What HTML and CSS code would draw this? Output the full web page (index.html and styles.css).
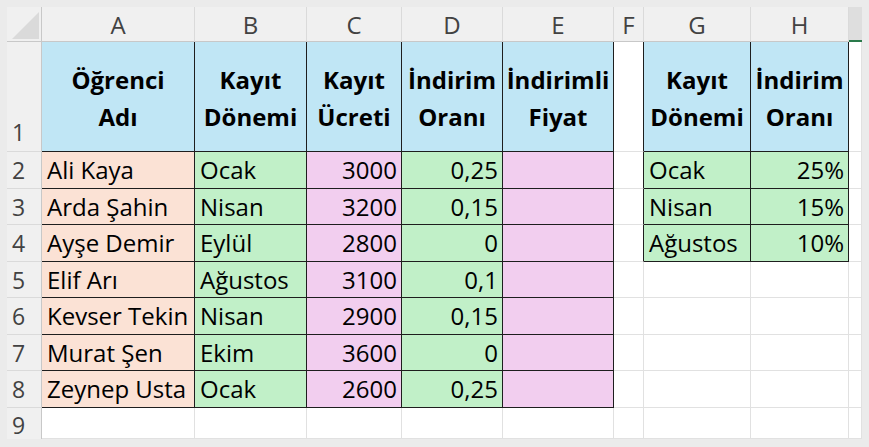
FILE: index.html
```html
<!DOCTYPE html>
<html lang="tr">
<head>
<meta charset="utf-8">
<title>Excel</title>
<link rel="stylesheet" href="styles.css">
</head>
<body>
<div class="sheet">
  <div class="corner"><span class="tri"></span></div>
  <div class="ch">A</div><div class="ch">B</div><div class="ch">C</div><div class="ch">D</div><div class="ch">E</div><div class="ch">F</div><div class="ch">G</div><div class="ch">H</div><div class="ch sel"></div>

  <div class="rh r1">1</div>
  <div class="c bk hd">Öğrenci<br>Adı</div>
  <div class="c bk hd">Kayıt<br>Dönemi</div>
  <div class="c bk hd">Kayıt<br>Ücreti</div>
  <div class="c bk hd">İndirim<br>Oranı</div>
  <div class="c bk hd">İndirimli<br>Fiyat</div>
  <div class="c bkr"></div>
  <div class="c bk hd">Kayıt<br>Dönemi</div>
  <div class="c bk hd">İndirim<br>Oranı</div>
  <div class="c"></div>

  <div class="rh">2</div>
  <div class="c bk pe">Ali Kaya</div><div class="c bk gr">Ocak</div><div class="c bk pk num">3000</div><div class="c bk gr num">0,25</div><div class="c bk pk"></div>
  <div class="c bkr"></div><div class="c bk gr">Ocak</div><div class="c bk gr num">25%</div><div class="c"></div>

  <div class="rh">3</div>
  <div class="c bk pe">Arda Şahin</div><div class="c bk gr">Nisan</div><div class="c bk pk num">3200</div><div class="c bk gr num">0,15</div><div class="c bk pk"></div>
  <div class="c bkr"></div><div class="c bk gr">Nisan</div><div class="c bk gr num">15%</div><div class="c"></div>

  <div class="rh">4</div>
  <div class="c bk pe">Ayşe Demir</div><div class="c bk gr">Eylül</div><div class="c bk pk num">2800</div><div class="c bk gr num">0</div><div class="c bk pk"></div>
  <div class="c bkr"></div><div class="c bk gr">Ağustos</div><div class="c bk gr num">10%</div><div class="c"></div>

  <div class="rh">5</div>
  <div class="c bk pe">Elif Arı</div><div class="c bk gr">Ağustos</div><div class="c bk pk num">3100</div><div class="c bk gr num">0,1</div><div class="c bk pk"></div>
  <div class="c"></div><div class="c"></div><div class="c"></div><div class="c"></div>

  <div class="rh">6</div>
  <div class="c bk pe">Kevser Tekin</div><div class="c bk gr">Nisan</div><div class="c bk pk num">2900</div><div class="c bk gr num">0,15</div><div class="c bk pk"></div>
  <div class="c"></div><div class="c"></div><div class="c"></div><div class="c"></div>

  <div class="rh">7</div>
  <div class="c bk pe">Murat Şen</div><div class="c bk gr">Ekim</div><div class="c bk pk num">3600</div><div class="c bk gr num">0</div><div class="c bk pk"></div>
  <div class="c"></div><div class="c"></div><div class="c"></div><div class="c"></div>

  <div class="rh">8</div>
  <div class="c bk pe">Zeynep Usta</div><div class="c bk gr">Ocak</div><div class="c bk pk num">2600</div><div class="c bk gr num">0,25</div><div class="c bk pk"></div>
  <div class="c"></div><div class="c"></div><div class="c"></div><div class="c"></div>

  <div class="rh r9">9</div>
  <div class="c"></div><div class="c"></div><div class="c"></div><div class="c"></div><div class="c"></div>
  <div class="c"></div><div class="c"></div><div class="c"></div><div class="c"></div>
</div>
</body>
</html>
```

FILE: styles.css
```css
html, body {
  margin: 0;
  padding: 0;
  background: #ebebeb;
}
body {
  padding: 7px;
  width: 869px;
  height: 447px;
  box-sizing: border-box;
  overflow: hidden;
  font-family: "Open Sans", "Liberation Sans", sans-serif;
}
.sheet {
  display: grid;
  grid-template-columns: 35px 153px 112px 95px 101px 111px 30px 107px 98px 13px;
  grid-template-rows: 35px 110px 37px 36px 37px 36px 37px 36px 37px 31px;
  width: 855px;
  height: 432px;
  background: #fff;
}
.sheet > div {
  box-sizing: border-box;
  min-width: 0;
  overflow: hidden;
  white-space: nowrap;
}
.corner {
  background: #f0f0f0;
  border-right: 1px solid #c8c8c8;
  border-bottom: 1px solid #c8c8c8;
  position: relative;
}
.tri {
  position: absolute;
  left: 5px;
  top: 5px;
  width: 27px;
  height: 27px;
  background: #dadada;
  clip-path: polygon(100% 0, 100% 100%, 0 100%);
}
.ch {
  background: #f0f0f0;
  border-right: 1px solid #dadada;
  border-bottom: 1px solid #c8c8c8;
  color: #424242;
  font-size: 24px;
  line-height: 34px;
  padding-top: 1px;
  text-align: center;
}
.ch.sel {
  background: #dedede;
  border-bottom: 2px solid #2a7a4b;
  border-right: none;
}
.rh {
  background: #f0f0f0;
  border-right: 1px solid #c8c8c8;
  border-bottom: 1px solid #dadada;
  color: #424242;
  font-size: 23px;
  line-height: 36px;
  padding-left: 5px;
}
.rh.r1 {
  display: flex;
  align-items: flex-end;
  padding-bottom: 1px;
}
.sheet > .rh.r9 {
  line-height: 25px;
  padding-top: 5px;
  border-bottom: none;
  overflow: visible;
}
.c {
  border-right: 1px solid #e1e1e1;
  border-bottom: 1px solid #e1e1e1;
  font-size: 24px;
  line-height: 36px;
  color: #000;
  padding: 0 4px 0 5px;
}
.c.bk {
  border-right-color: #1e1e1e;
  border-bottom-color: #1e1e1e;
}
.c.bkr {
  border-right-color: #1e1e1e;
}
.c.num {
  text-align: right;
}
.hd {
  background: #c0e6f5;
  font-weight: 700;
  text-align: center;
  line-height: 37px;
  display: flex;
  align-items: center;
  justify-content: center;
  padding: 3px 0 0;
  white-space: normal;
}
.pe { background: #fbe2d5; }
.gr { background: #c1f0c8; }
.pk { background: #f2ceef; }
```
